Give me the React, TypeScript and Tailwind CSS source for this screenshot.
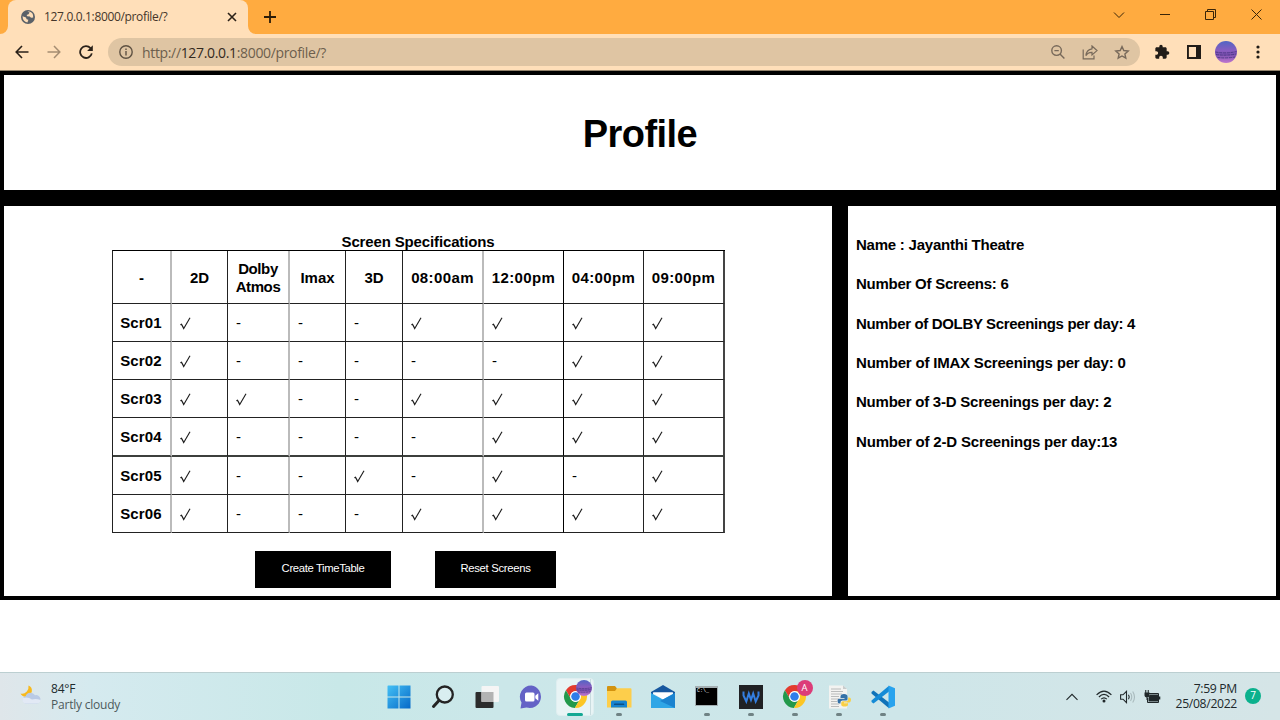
import type { ReactNode } from "react";

const headers = [
  { label: "-", cls: "" },
  { label: "2D", cls: "" },
  { label: "Dolby Atmos", cls: "tracking-[-0.4px]" },
  { label: "Imax", cls: "" },
  { label: "3D", cls: "" },
  { label: "08:00am", cls: "tracking-[0.38px]" },
  { label: "12:00pm", cls: "tracking-[0.38px]" },
  { label: "04:00pm", cls: "tracking-[0.38px]" },
  { label: "09:00pm", cls: "tracking-[0.38px]" },
];

const screens: { name: string; marks: string }[] = [
  { name: "Scr01", marks: "y---yyyy" },
  { name: "Scr02", marks: "y-----yy" },
  { name: "Scr03", marks: "yy--yyyy" },
  { name: "Scr04", marks: "y----yyy" },
  { name: "Scr05", marks: "y--y-y-y" },
  { name: "Scr06", marks: "y---yyyy" },
];

const columnBorder = [
  "border-r-2 border-r-[#bbbbbb]",
  "border-r border-r-[#222222]",
  "border-r-2 border-r-[#bbbbbb]",
  "border-r border-r-[#222222]",
  "border-r border-r-[#222222]",
  "border-r-2 border-r-[#bbbbbb]",
  "border-r border-r-black",
  "border-r border-r-[#222222]",
  "border-r-2 border-r-[#444444]",
];

const facts = [
  { text: "Name : Jayanthi Theatre", cls: "tracking-[-0.23px]" },
  { text: "Number Of Screens: 6", cls: "tracking-[-0.25px]" },
  { text: "Number of DOLBY Screenings per day: 4", cls: "tracking-[-0.34px]" },
  { text: "Number of IMAX Screenings per day: 0", cls: "tracking-[-0.2px]" },
  { text: "Number of 3-D Screenings per day: 2", cls: "tracking-[-0.23px]" },
  { text: "Number of 2-D Screenings per day:13", cls: "tracking-[-0.18px]" },
];

function Check() {
  return (
    <svg width="12" height="14" viewBox="0 0 12 14" fill="none" stroke="#1a1a1a" role="img" aria-label="yes">
      <path d="M0.4 7.8L1.5 7.2L3.7 11.4" strokeWidth="1.2" />
      <path d="M3.3 12.2L10 0.7" strokeWidth="1.1" />
    </svg>
  );
}

function Avatar({ className }: { className: string }) {
  return (
    <svg className={className} viewBox="0 0 22 22">
      <defs>
        <linearGradient id="dusk" x1="0" y1="0" x2="0" y2="1">
          <stop offset="0" stopColor="#5165c4" />
          <stop offset="0.45" stopColor="#8a5cc0" />
          <stop offset="0.6" stopColor="#7a50b0" />
          <stop offset="1" stopColor="#c077cf" />
        </linearGradient>
      </defs>
      <circle cx="11" cy="11" r="11" fill="url(#dusk)" />
      <path d="M0.5 11Q11 13 21.500 10.500M1 13.500Q11 15 21 13M2.500 16.500Q11 17.500 20 16" fill="none" stroke="#4b3585" strokeWidth="0.9" strokeDasharray="3 0.8" />
    </svg>
  );
}

function Chrome() {
  return (
    <svg width="25" height="25" viewBox="0 0 24 24">
      <path d="M21.8 7H12A5 5 0 0 0 7.67 14.5L2.77 6.01A11 11 0 0 1 21.8 7Z" fill="#e33b2e" />
      <path d="M2.77 6.01L7.67 14.5A5 5 0 0 0 16.33 14.5L11.43 22.99A11 11 0 0 1 2.77 6.01Z" fill="#23994b" />
      <path d="M11.43 22.99L16.33 14.5A5 5 0 0 0 12 7H21.8A11 11 0 0 1 11.43 22.99Z" fill="#fcc624" />
      <circle cx="12" cy="12" r="5.2" fill="#fff" />
      <circle cx="12" cy="12" r="4.100" fill="#2f7de9" />
    </svg>
  );
}

function Slot({ children }: { children: ReactNode }) {
  return <div className="flex w-8 shrink-0 items-center justify-center">{children}</div>;
}

function TabStrip() {
  return (
    <div className="flex h-[34px] items-stretch bg-[#ffab40]">
      <svg className="self-end" width="8" height="8" viewBox="0 0 8 8">
        <path d="M8 0V8H0A8 8 0 0 0 8 0Z" fill="#ffdfb9" />
      </svg>
      <div className="flex w-[240px] items-center rounded-t-[8px] bg-[#ffdfb9] pl-[13px]">
        <svg width="14" height="14" viewBox="0 0 14 14">
          <circle cx="7" cy="7" r="7" fill="#5b6168" />
          <path d="M1.5 6.2L5 7.4L5.6 9.2L7.4 9.8L6.4 12.4Q1.8 11.8 1.5 6.2ZM6.4 1.6L8.6 2.6L7.5 4.2L5.6 5L6.2 6.2L8.8 6.4L10 7.8L12.2 7.4Q12.4 2.2 8.2 1.5Z" fill="#ffdfb9" />
        </svg>
        <span className="ml-[9px] text-[12px] tracking-[-0.34px] text-[#45362a]">127.0.0.1:8000/profile/?</span>
        <svg className="mr-[11px] ml-auto" width="10" height="10" viewBox="0 0 10 10" stroke="#2b2118" strokeWidth="1.6">
          <path d="M1 1L9 9M9 1L1 9" />
        </svg>
      </div>
      <svg className="self-end" width="8" height="8" viewBox="0 0 8 8">
        <path d="M0 0V8H8A8 8 0 0 1 0 0Z" fill="#ffdfb9" />
      </svg>
      <svg className="ml-[8px] self-center" width="12" height="12" viewBox="0 0 12 12" stroke="#2b1c08" strokeWidth="1.8">
        <path d="M6 0V12M0 6H12" />
      </svg>
      <div className="ml-auto flex h-[29px] items-center text-[#3a2508]">
        <div className="flex w-[46px] justify-center">
          <svg width="12" height="8" viewBox="0 0 12 8" fill="none" stroke="currentColor"><path d="M1 1.5L6 6.5L11 1.5" /></svg>
        </div>
        <div className="flex w-[46px] justify-center">
          <svg width="10" height="3" viewBox="0 0 10 3" fill="currentColor"><path d="M0 1H10V2H0Z" /></svg>
        </div>
        <div className="flex w-[46px] justify-center pr-px">
          <svg width="11" height="11" viewBox="0 0 11 11" fill="none" stroke="currentColor"><path d="M0.5 2.5H8.5V10.5H0.5ZM2.5 2.5V0.5H10.5V8.5H8.5" /></svg>
        </div>
        <div className="flex w-[46px] justify-center pr-px">
          <svg width="11" height="11" viewBox="0 0 11 11" fill="none" stroke="currentColor"><path d="M0.5 0.5L10.5 10.5M10.5 0.5L0.5 10.5" /></svg>
        </div>
      </div>
    </div>
  );
}

function Toolbar() {
  return (
    <div className="flex h-[37px] items-center border-b border-[#93836c] bg-[#ffdfb9] pl-[6px]">
      <Slot>
        <svg width="14" height="14" viewBox="0 0 14 14" fill="none" stroke="#2a2119" strokeWidth="1.6"><path d="M13.5 7H1.5M7 1L1.2 7L7 13" /></svg>
      </Slot>
      <Slot>
        <svg width="14" height="14" viewBox="0 0 14 14" fill="none" stroke="#a58d72" strokeWidth="1.5"><path d="M0.5 7H12.5M7 1L12.8 7L7 13" /></svg>
      </Slot>
      <Slot>
        <svg width="14" height="14" viewBox="0 0 14 14" fill="none" stroke="#2a2119" strokeWidth="1.8">
          <path d="M11.5 3.2A5.9 5.9 0 1 0 12.8 8.4" />
          <path d="M13.8 0.2V5.9H8.1Z" fill="#2a2119" stroke="none" />
        </svg>
      </Slot>
      <div className="ml-[6px] flex h-7 w-[1032px] items-center rounded-full bg-[#dfc5a3] pr-[2px] pl-[11px]">
        <svg width="14" height="14" viewBox="0 0 14 14" fill="none" stroke="#5f5243" strokeWidth="1.4">
          <circle cx="7" cy="7" r="6.2" />
          <path d="M7 6V10.5M7 3.4V4.9" />
        </svg>
        <span className="ml-[9px] text-[14px] tracking-[-0.34px] text-[#6d5f4d]">
          http://<span className="text-[#33291e]">127.0.0.1</span>:8000/profile/?
        </span>
        <div className="ml-auto flex text-[#77695a]">
          <Slot>
            <svg width="14" height="14" viewBox="0 0 14 14" fill="none" stroke="currentColor" strokeWidth="1.4"><circle cx="5.600" cy="5.600" r="4.800" /><path d="M9 9L13.400 13.400M3.400 5.600H7.800" /></svg>
          </Slot>
          <Slot>
            <svg width="16" height="15" viewBox="0 0 16 15" fill="none" stroke="currentColor" strokeWidth="1.2"><path d="M1.2 4.5V13.8H12V10.5M10 1L15 5.6L10 10V7.4Q5.8 7.2 3.9 10.6Q4.4 4.6 10 3.8Z" /></svg>
          </Slot>
          <Slot>
            <svg width="16" height="15" viewBox="0 0 16 15" fill="none" stroke="currentColor" strokeWidth="1.4"><path d="M8 1.6L9.8 5.5L14.2 6L10.9 8.9L11.8 13.2L8 11L4.2 13.2L5.1 8.9L1.8 6L6.2 5.5Z" /></svg>
          </Slot>
        </div>
      </div>
      <div className="ml-[6px] flex">
        <Slot>
          <svg width="16" height="16" viewBox="0 0 24 24" fill="#211c17"><path d="M20.5 11H19V7c0-1.1-.9-2-2-2h-4V3.5a2.5 2.5 0 0 0-5 0V5H4c-1.1 0-1.99.9-1.99 2v3.8H3.5c1.49 0 2.7 1.21 2.7 2.7s-1.21 2.7-2.7 2.7H2V20c0 1.1.9 2 2 2h3.8v-1.5c0-1.49 1.21-2.7 2.7-2.7s2.7 1.21 2.7 2.7V22H17c1.1 0 2-.9 2-2v-4h1.5a2.5 2.5 0 0 0 0-5z" /></svg>
        </Slot>
        <Slot>
          <svg width="14" height="14" viewBox="0 0 14 14"><path fillRule="evenodd" d="M0 0H14V14H0ZM1.900 2V12H9V2Z" fill="#211c17" /></svg>
        </Slot>
        <Slot><Avatar className="size-[22px]" /></Slot>
        <Slot>
          <svg width="4" height="14" viewBox="0 0 4 14" fill="#211c17"><circle cx="2" cy="2" r="1.6" /><circle cx="2" cy="7" r="1.6" /><circle cx="2" cy="12" r="1.6" /></svg>
        </Slot>
      </div>
    </div>
  );
}

function Schedule() {
  return (
    <div className="ml-[108px] grid w-[613px] grid-cols-[59px_56px_62px_56px_57px_81px_80px_80px_81px] grid-rows-[53px_38px_38px_38px_39px_38px_38px] border-t border-l border-t-black border-l-[#222222]">
      {headers.map((h, i) => (
        <div key={h.label} className={`flex items-center justify-center border-b border-b-[#222222] px-1 pt-[2px] text-center leading-[18px] font-bold ${h.cls} ${columnBorder[i]}`}>
          {h.label}
        </div>
      ))}
      {screens.map((s, r) => {
        const bottom = r === 3 ? "border-b-2 border-b-[#3c3f3c]" : "border-b border-b-[#222222]";
        return [
          <div key={s.name} className={`flex items-center justify-center pt-[2px] pr-px font-bold tracking-[0.15px] ${bottom} ${columnBorder[0]}`}>
            {s.name}
          </div>,
          ...s.marks.split("").map((m, i) => (
            <div key={s.name + i} className={`flex items-center pt-[2px] pl-[8px] ${bottom} ${columnBorder[i + 1]}`}>
              {m === "y" ? <Check /> : "-"}
            </div>
          )),
        ];
      })}
    </div>
  );
}

function TaskIcon({ children, running }: { children: ReactNode; running?: boolean }) {
  return (
    <div className="relative flex w-11 items-center justify-center">
      {children}
      {running && <span className="absolute bottom-[4px] left-[19px] h-[3px] w-[6px] rounded-full bg-[#6f8284]" />}
    </div>
  );
}

function Taskbar() {
  return (
    <div className="flex h-12 border-t border-[#bccfd1] bg-[linear-gradient(90deg,#dfe6ea_0px,#d5eaef_90px,#c8e8e8_340px,#cbe7e9_500px,#cee6e9_900px,#d5e5e7_1280px)]">
      <div className="flex w-[376.6px] items-center pl-[20px]">
        <svg className="-mt-[3px]" width="22" height="20" viewBox="0 0 22 20">
          <path d="M8.5 0.5Q12.5 2 11.8 6.5Q10.5 12 5.5 11.8Q1.8 11.5 0.5 8.5Q4 9.5 6.8 6.5Q9 4 8.5 0.5Z" fill="#f8b91c" />
          <path d="M5.5 18.5A3.8 3.8 0 0 1 5.6 11.2A5.2 5.2 0 0 1 15 10.3A4.2 4.2 0 1 1 16.5 18.5Z" fill="#b9cae6" />
          <path d="M5.5 18.5A3.6 3.6 0 0 1 3 13Q8 11.5 12 14.5Q16 13.5 20.7 15Q20 18.5 16.5 18.5Z" fill="#e2e9f5" />
        </svg>
        <div className="ml-[9px] text-[12px] leading-[16px] tracking-[-0.22px]">
          <div className="text-[#202a2c]">84°F</div>
          <div className="text-[#4d5a5c]">Partly cloudy</div>
        </div>
      </div>
      <TaskIcon>
        <svg width="24" height="24" viewBox="0 0 24 24">
          <defs><linearGradient id="win" x1="0" y1="0" x2="1" y2="1"><stop offset="0" stopColor="#44c0f5" /><stop offset="1" stopColor="#0669c8" /></linearGradient></defs>
          <path d="M1 0.5H11.5V11.4H0.5V1ZM12.5 0.5H23.5V11.4H12.5ZM0.5 12.4H11.5V23.5H0.5ZM12.5 12.4H23.5V23.5H12.5Z" fill="url(#win)" />
        </svg>
      </TaskIcon>
      <TaskIcon>
        <svg width="24" height="24" viewBox="0 0 24 24" fill="none" stroke="#232323"><circle cx="13.8" cy="9.5" r="8" strokeWidth="2.3" fill="#d9eef0" /><path d="M8 15.5L2.5 21.5" strokeWidth="3" strokeLinecap="round" /></svg>
      </TaskIcon>
      <TaskIcon>
        <svg width="24" height="24" viewBox="0 0 24 24"><rect x="0.5" y="7" width="18" height="16" rx="1" fill="#2c2c2c" /><rect x="6.5" y="1" width="17.5" height="16" rx="1" fill="#f5f5f5" /><path d="M6.5 7H18.5V17H6.5Z" fill="#b3b3b3" /></svg>
      </TaskIcon>
      <TaskIcon>
        <svg width="24" height="24" viewBox="0 0 24 24">
          <path d="M12.5 0.5A11.3 11.3 0 1 1 7.5 22.5L1.5 23.5L2.5 17.5A11.3 11.3 0 0 1 12.5 0.5Z" fill="#6462c6" />
          <rect x="6" y="7.5" width="9.5" height="9" rx="1.5" fill="#fff" /><path d="M16.3 10.8L19.3 8.2V15.8L16.3 13.2Z" fill="#fff" />
        </svg>
      </TaskIcon>
      <div className="relative flex w-11 items-center justify-center">
        <div className="flex h-[38px] w-[38px] items-center rounded-[4px] border border-[#dfeef0] bg-[#e8f4f5]">
          <div className="flex h-full w-[34px] items-center justify-center border-r border-[#c9dcdf] pl-[4px]"><Chrome /></div>
        </div>
        <Avatar className="absolute top-[7px] left-[23px] size-[16px]" />
        <span className="absolute bottom-[4px] left-[14px] h-[3px] w-[16px] rounded-full bg-[#13a893]" />
      </div>
      <TaskIcon running>
        <svg width="26" height="24" viewBox="0 0 26 24">
          <path d="M1 2Q1 1 2 1H9L11 3.5V8H1Z" fill="#d3930f" /><path d="M1 6H9L11 3.3H24.5Q25.5 3.3 25.5 4.5V22.5H1Z" fill="#fdce4b" />
          <path d="M5 22.5V17Q5 15.5 6.5 15.5H19.5Q21 15.5 21 17V22.5Z" fill="#1683cf" /><path d="M8.5 18.5H17.5Q18.2 18.5 18.2 19.2V20H8V19.2Z" fill="#0a4f85" />
        </svg>
      </TaskIcon>
      <TaskIcon>
        <svg width="26" height="24" viewBox="0 0 26 24">
          <path d="M13 0L25 7V14H1V7Z" fill="#17579f" /><path d="M3 7.5H23V14L13 19L3 14Z" fill="#f4f7fa" />
          <path d="M1 8L13 14.5L25 8V23H1Z" fill="#2fa6e6" /><path d="M3 7.5H23L13 14.2Z" fill="#fff" /><path d="M25 8L10 16L25 23Z" fill="#1b83cf" />
        </svg>
      </TaskIcon>
      <TaskIcon running>
        <div className="mb-[2px] flex h-[20px] w-[23px] flex-col border border-t-2 border-[#a4afb2] bg-black pl-[1px] font-mono text-[5px] leading-[6px] text-white">C:\_</div>
      </TaskIcon>
      <TaskIcon running>
        <svg width="24" height="24" viewBox="0 0 24 24"><rect width="24" height="24" fill="#202124" /><path d="M4.500 6.500V10.500L7.300 16.500L9.800 8.500L12 15L14.200 8.500L16.700 16.500L19.500 10.500V6.500" fill="none" stroke="#347ee0" strokeWidth="2" /></svg>
      </TaskIcon>
      <TaskIcon running>
        <Chrome />
        <span className="absolute top-[7px] left-[24px] flex size-[16px] items-center justify-center rounded-full bg-[#dc3c78] text-[9.500px] text-white">A</span>
      </TaskIcon>
      <TaskIcon running>
        <svg width="24" height="24" viewBox="0 0 24 24">
          <path d="M2 0.5H16L20 4V23.5H2Z" fill="#f3f3f1" /><path d="M16 0.5V4H20Z" fill="#c9cccc" />
          <path d="M4 4H14M4 6.5H16M4 9H15M4 11.5H12M4 14H12M4 16.5H10M4 19H12M4 21.5H12" stroke="#b3b5b5" strokeWidth="0.9" />
          <path d="M17 9Q13.5 9 13.5 11.5V13H17.5V13.7H12Q10.5 13.7 10.5 16Q10.5 18.5 12.5 18.5H13.5V17Q13.5 15.5 15.5 15.5H19Q20.5 15.5 20.5 14V11.5Q20.5 9 17 9Z" fill="#3371a8" />
          <path d="M17.5 21.5Q21 21.5 21 19.5V18.2H17V17.5H22.5Q24 17 24 14.8Q24 12.5 22 12.5H21.2V14Q21.2 16.2 19.5 16.2H15.8Q14.2 16.2 14.2 18V19.5Q14.2 21.5 17.5 21.5Z" fill="#f8cf45" />
        </svg>
      </TaskIcon>
      <TaskIcon running>
        <svg width="26" height="24" viewBox="0 0 26 24">
          <path d="M1.5 7L3.5 5.5L19 17.5V23L17.5 22L1.5 8.5Z" fill="#1073b9" /><path d="M1.5 17L3.5 18.5L19 6.5V1L17.5 2L1.5 15.5Z" fill="#158bd6" />
          <path d="M18.5 0.5L25 3.2V20.8L18.5 23.5Z" fill="#28a3ee" />
        </svg>
      </TaskIcon>
      <div className="flex flex-1 items-center text-[#20282a]">
        <svg className="ml-[161.400px]" width="12" height="8" viewBox="0 0 12 8" fill="none" stroke="currentColor" strokeWidth="1.1"><path d="M0.5 6.8L6 1.3L11.5 6.8" /></svg>
        <svg className="ml-[18px]" width="16" height="13" viewBox="0 0 16 13" fill="none" stroke="currentColor" strokeWidth="1.2"><path d="M0.6 4.8Q8 -2.6 15.4 4.8M2.9 7Q8 1.8 13.1 7M5.2 9.2Q8 6.4 10.8 9.2" /><circle cx="8" cy="11" r="1.5" fill="currentColor" stroke="none" /></svg>
        <svg className="ml-[8px]" width="16" height="14" viewBox="0 0 16 14" fill="none" stroke="currentColor" strokeWidth="1.1"><path d="M0.6 4.8H3L6.5 1.3V12.7L3 9.2H0.6Z" /><path d="M8.5 4.8Q10 7 8.5 9.2" /><path d="M10.5 3Q13 7 10.5 11M12.7 1.5Q16.3 7 12.7 12.5" stroke="#a9babd" /></svg>
        <svg className="ml-[8px]" width="17" height="14" viewBox="0 0 17 14"><path d="M5 3.5H14.5V12.5H3.5V8" fill="none" stroke="currentColor" /><path d="M6 4.500H14V11.500H4.500V8ZM15 6.5H16.3V9.5H15ZM0.5 2.5H5.5V5.5Q5.5 7.2 3.5 7.5V10H2.5V7.5Q0.5 7.2 0.5 5.5ZM1.2 0H2.3V2.5H1.2ZM3.7 0H4.8V2.5H3.7Z" fill="currentColor" /></svg>
        <div className="ml-auto -mt-px text-right text-[12.200px] leading-[15px] tracking-[-0.32px]">
          <div>7:59 PM</div>
          <div>25/08/2022</div>
        </div>
        <span className="mr-[19px] ml-[8px] flex size-[16px] -translate-y-px items-center justify-center rounded-full bg-[#0bb18d] text-[10px] text-white">7</span>
      </div>
    </div>
  );
}

export default function App() {
  return (
    <div className="flex h-[720px] w-[1280px] flex-col overflow-hidden bg-white font-['Open_Sans',sans-serif]">
      <TabStrip />
      <Toolbar />
      <main className="flex h-[529px] flex-col gap-4 bg-black p-1 font-['Liberation_Sans',sans-serif] text-[15px] text-black">
        <header className="flex h-[115px] shrink-0 items-center justify-center bg-white pt-[3px]">
          <h1 className="text-[38px] font-bold tracking-[-0.55px]">Profile</h1>
        </header>
        <div className="flex h-[390px] gap-4">
          <section className="w-[828px] bg-white pt-[26px]">
            <h2 className="h-[18px] text-center leading-[19px] font-bold tracking-[-0.14px]">Screen Specifications</h2>
            <Schedule />
            <div className="mt-[18px] ml-[251px] flex gap-[44px] text-[11.3px] text-white">
              <button className="h-[37px] w-[136px] bg-black pb-[2px] tracking-[-0.36px]">Create TimeTable</button>
              <button className="h-[37px] w-[121px] bg-black pb-[2px] tracking-[-0.3px]">Reset Screens</button>
            </div>
          </section>
          <section className="w-[428px] bg-white pt-[19.6px] pl-[8px]">
            {facts.map((f) => (
              <p key={f.text} className={`flex h-[39.36px] items-center font-bold ${f.cls}`}>{f.text}</p>
            ))}
          </section>
        </div>
      </main>
      <div className="h-[72px] bg-white" />
      <Taskbar />
    </div>
  );
}
